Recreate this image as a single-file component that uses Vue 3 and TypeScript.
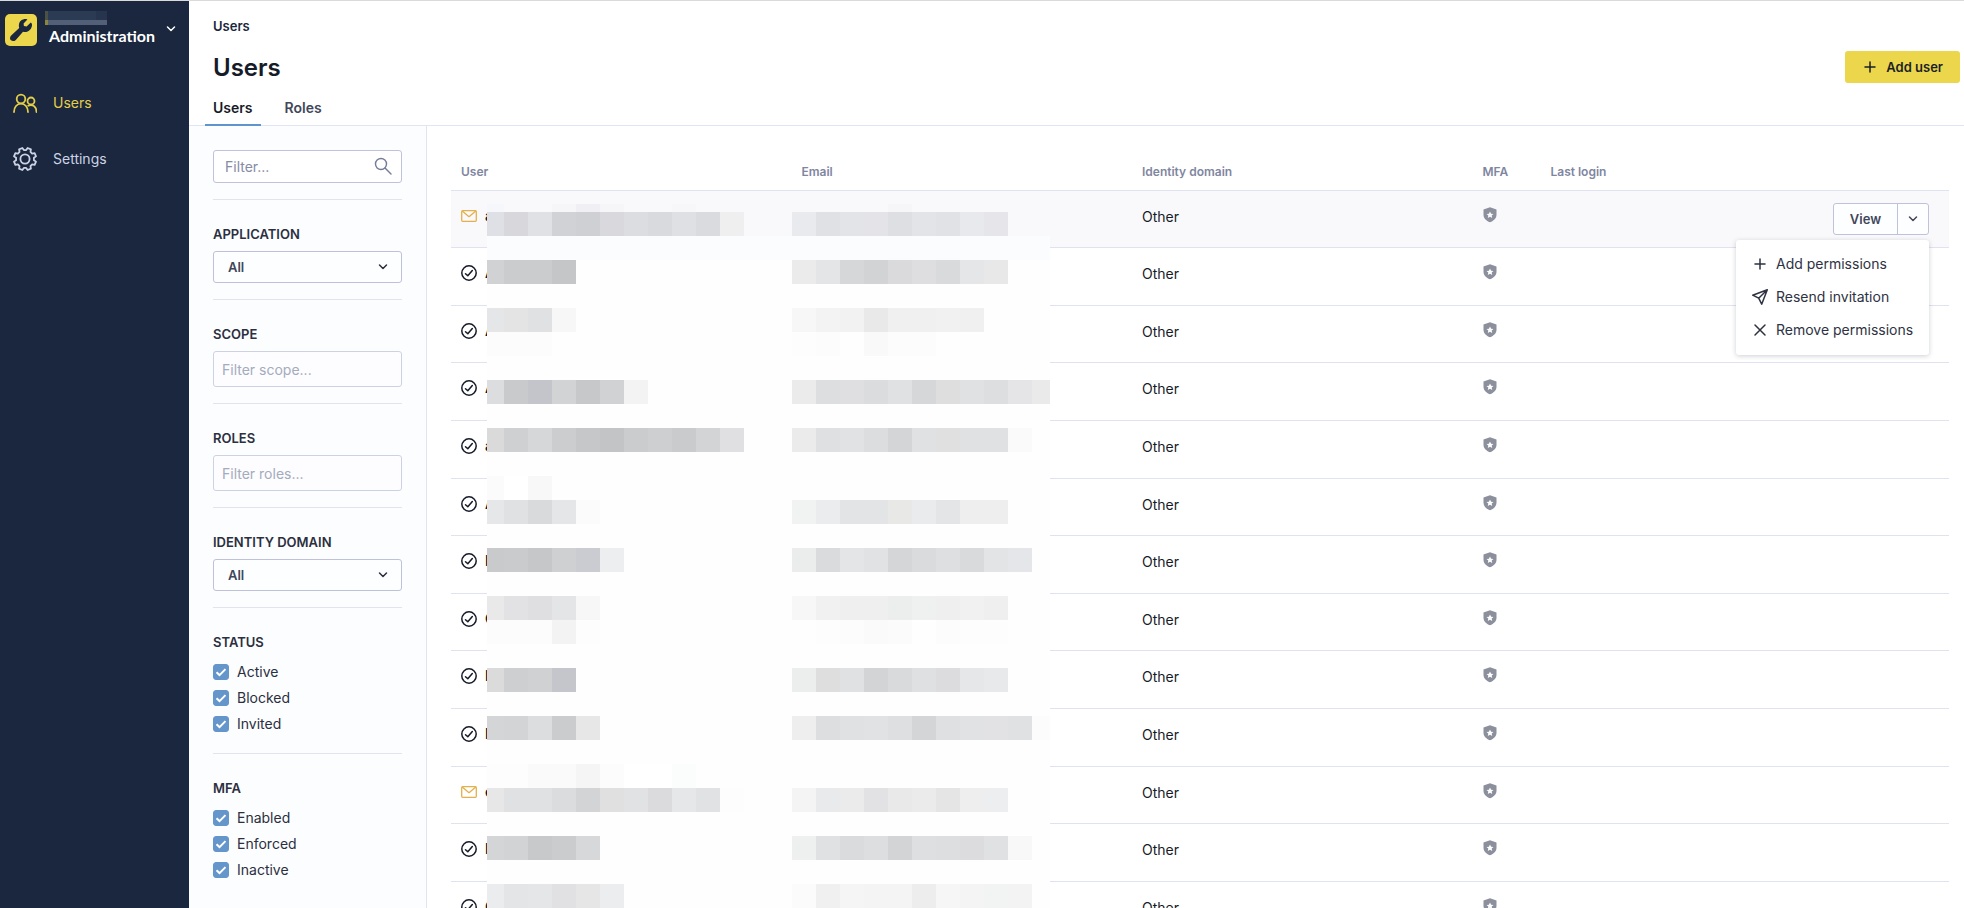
<script setup lang="ts">
import { ref } from 'vue'

type Status = 'invited' | 'active'
interface UserRow { initial: string; status: Status; domain: string }
interface Tile { col: number; row: number; color: string }
interface CheckGroup { title: string; options: { label: string; checked: boolean }[] }

const users = ref<UserRow[]>(
  ['a', 'A', 'A', 'A', 'a', 'A', 'B', 'C', 'D', 'E', 'e', 'F', 'G'].map((initial, i) => ({
    initial,
    status: i === 0 || i === 10 ? 'invited' : 'active',
    domain: 'Other',
  })),
)

const search = ref('')
const scope = ref('')
const roles = ref('')
const application = ref('All')
const domain = ref('All')
const groups = ref<CheckGroup[]>([
  { title: 'STATUS', options: ['Active', 'Blocked', 'Invited'].map((label) => ({ label, checked: true })) },
  { title: 'MFA', options: ['Enabled', 'Enforced', 'Inactive'].map((label) => ({ label, checked: true })) },
])

// Redaction strips: [grid row, first grid column, tile colours]
const strips: [number, number, string][] = [
  [1, 1, 'f5f7fb f9f9fb f9f9fb f6f6f8 f0eff4 f6f6f8 f9f9fb f9f9fb f7f7f9 f9f9fb f9f9fb'],
  [1, 18, 'f6f6f8'],
  [2, 1, 'dfe0e5 d8d7dc e0e1e5 d1d2d6 cfd0d4 d9d8dd dcdde1 d9dade dfe0e4 dadbdf efeff0'],
  [2, 14, 'e9eaee e0e1e5 e3e4e8 e4e3e8 dedfe3 e3e4e7 e1e2e5 e8e9ed e6e5ea'],
  [4, 1, 'd1d2d4 cbcccd cbcccd c5c6c8'],
  [4, 14, 'ebebeb e3e5e6 d6d7d9 d2d3d5 dadadc dedee0 d9dadc e5e6e8 e8e8e8'],
  [6, 1, 'e5e6e7 e4e4e4 e0e1e3 f7f7f7'],
  [6, 14, 'f7f7f7 f3f3f3 f2f2f2 e9e9e9 f0f0f0 f0f0f0 f1f1f1 f0f0f0'],
  [7, 1, 'fcfcfc fcfcfc fcfcfc'],
  [7, 14, 'fdfdfd fcfcfc fefefe f9f9f9 fcfcfc fcfcfc'],
  [9, 1, 'dcdddf c9cacc c4c5ca d2d3d5 c7c8ca d1d2d4 f3f3f3'],
  [9, 14, 'ebebeb dddee0 dfdfe1 dbdcde dfe1e2 d6d7d9 dededf e0e1e3 dcdee0 e5e5e8 eaeaea'],
  [11, 1, 'dadadb cfd0d2 d6d7d9 cccdcf c6c7c9 c3c4c6 cbccce cecfd1 cacbcd d3d4d6 e0e0e2'],
  [11, 14, 'ebebeb dfe0e2 e1e2e4 dcdddf d4d5d7 dfe1e2 e0e0e0 e0e1e3 e0e1e3 fafafa'],
  [13, 1, 'fbfbfb ffffff f8f8f8'],
  [14, 1, 'e6e7e8 e0e1e3 d9dadc e5e6e8 fbfbfb'],
  [14, 14, 'f0f3f2 ebecee e3e4e6 e3e4e6 e8e8e7 eaebed e4e5e7 eeeeee eeeeee'],
  [16, 1, 'c9cacc cacbcd c6c7c9 cfd0d2 cbccd1 edeeef'],
  [16, 14, 'ebedec dadbdd e4e5e7 e0e2e3 d5d6d8 dadbdd dedfe1 d9dadc e3e4e6 e5e6e9'],
  [18, 1, 'e9e9e9 e2e2e4 dfdfe1 e3e5e6 f7f7f7'],
  [18, 14, 'f7f7f7 f1f1f1 efefef efefef ebeeed eff1f1 efefef f1f1f1 efefef'],
  [19, 1, 'fcfcfc fcfcfc fcfcfc f3f3f3 fdfdfd'],
  [19, 14, 'fefefe fdfdfd fcfcfc fafafa fbfbfb fefefe fcfcfc fdfdfd fdfdfd'],
  [21, 1, 'dbdbdc cecfd1 d0d1d3 c5c6cb'],
  [21, 14, 'ebeeed dededf dfe1e2 d3d4d6 d9dadc dfe0e2 dcdcde e6e7e9 e8e9eb'],
  [23, 1, 'd4d5d7 d3d4d6 dcdddf cbcccd e7e7e7'],
  [23, 14, 'eeeeee dddee0 e0e1e3 e0e2e3 dedfe1 d4d5d7 dfe0e2 e0e2e3 e2e2e4 e0e1e3 fcfcfc'],
  [25, 1, 'fdfdfd fdfdfd fafafa fafafa f5f5f5 fcfcfc ffffff ffffff fbfdfc'],
  [26, 1, 'e7e7e7 e0e1e3 e0e1e3 dbdcde d3d4d6 e0e0e0 e1e2e4 dbdbdd e6e7e8 e1e2e4 fdfdfd'],
  [26, 14, 'f4f4f4 e8eaec ebebeb e2e2e4 e9e9e9 ebebeb e5e5e5 eeeeee edeeef'],
  [28, 1, 'd4d5d7 d2d3d5 c8c9cb cbccce d7d8da'],
  [28, 14, 'eef0ef dfe1e2 dadbdd dddee0 d3d4d6 dedfe1 dddee0 dcdcde e0e1e3 f8f8f8'],
  [30, 1, 'ebecee e4e5e7 e5e6e8 e1e1e3 e6e6e6 ecedef'],
  [30, 14, 'fbfbfb f0f0f0 f5f5f5 f4f4f4 f4f4f4 ededed f6f6f6 f4f4f4 f2f4f3 f3f3f3'],
]
const tiles: Tile[] = strips.flatMap(([row, start, list]) =>
  list.split(' ').map((c, i) => ({ row, col: start + i, color: '#' + c })),
)

// Outline of an eight-toothed cog centred on 12,12
const cog = (() => {
  const pts: string[] = []
  for (let i = 0; i < 8; i++) {
    const mid = i * 45 + 22.5
    for (const [offset, radius] of [[-15, 9], [-9, 11.3], [9, 11.3], [15, 9]]) {
      const a = ((mid + offset - 90) * Math.PI) / 180
      pts.push(`${(12 + radius * Math.cos(a)).toFixed(2)} ${(12 + radius * Math.sin(a)).toFixed(2)}`)
    }
  }
  return `M${pts.join('L')}Z`
})()
</script>

<template>
  <div class="app">
    <aside class="sidebar">
      <button class="brand" type="button">
        <svg class="logo" viewBox="0 0 32 32" aria-hidden="true">
          <rect width="32" height="32" rx="5" fill="#ecd74c" />
          <path d="M25.8 8.6 21.6 12.6 18.9 11.9 18.6 9.6 22.4 5.4C18.7 4.2 14.4 6.5 13.9 10.7c-.1 1.3 0 2.3.3 3.2L6.2 21.4c-1.7 1.7-1.4 3.8-.2 4.9 1.3 1.2 3.3 1.1 4.8-.4L18 17.7c4.7 1.4 9.3-2.7 9-7.3-.1-.9-.6-1.5-1.2-1.8Z" fill="#1a273e" />
        </svg>
        <span class="brand-text">
          <span class="org" aria-hidden="true"><i></i><i></i><i></i><i></i></span>
          <span class="product">Administration</span>
        </span>
        <svg class="brand-chevron" viewBox="0 0 10 10" aria-hidden="true"><path d="M1.5 3 5 6.5 8.5 3" /></svg>
      </button>
      <nav class="nav">
        <a href="#users" class="nav-item current">
          <svg viewBox="0 0 24 24" aria-hidden="true">
            <circle cx="8" cy="8" r="4.3" /><path d="M1 21c0-5 3-8.300 7-8.300s7 3.300 7 8.300" />
            <circle cx="18" cy="10" r="3.5" /><path d="M15.200 14.700c4.500-2.200 8.300 1.300 8.300 6.300" />
          </svg>
          Users
        </a>
        <a href="#settings" class="nav-item">
          <svg viewBox="0 0 24 24" aria-hidden="true"><path :d="cog" /><circle cx="12" cy="12" r="4.6" /></svg>
          Settings
        </a>
      </nav>
    </aside>

    <div class="page">
      <header class="header">
        <a href="#users" class="crumb">Users</a>
        <div class="title-row">
          <h1>Users</h1>
          <button class="add" type="button">
            <svg viewBox="0 0 16 16" aria-hidden="true"><path d="M8 3v10M3 8h10" /></svg>
            Add user
          </button>
        </div>
        <nav class="tabs">
          <a href="#users" class="tab selected">Users</a>
          <a href="#roles" class="tab">Roles</a>
        </nav>
      </header>

      <div class="body">
        <form class="filters" @submit.prevent>
          <div class="search">
            <input v-model="search" type="text" placeholder="Filter..." aria-label="Filter users" />
            <svg viewBox="0 0 18 18" aria-hidden="true"><circle cx="7" cy="7" r="5.5" /><path d="m11 11 6 6" /></svg>
          </div>
          <section class="group">
            <label for="application">APPLICATION</label>
            <div class="select">
              <select id="application" v-model="application"><option>All</option></select>
              <svg viewBox="0 0 10 10" aria-hidden="true"><path d="M1.5 3 5 6.5 8.5 3" /></svg>
            </div>
          </section>
          <section class="group">
            <label for="scope">SCOPE</label>
            <input id="scope" v-model="scope" class="text" type="text" placeholder="Filter scope..." />
          </section>
          <section class="group">
            <label for="roles">ROLES</label>
            <input id="roles" v-model="roles" class="text" type="text" placeholder="Filter roles..." />
          </section>
          <section class="group">
            <label for="domain">IDENTITY DOMAIN</label>
            <div class="select">
              <select id="domain" v-model="domain"><option>All</option></select>
              <svg viewBox="0 0 10 10" aria-hidden="true"><path d="M1.5 3 5 6.5 8.5 3" /></svg>
            </div>
          </section>
          <fieldset v-for="group in groups" :key="group.title" class="group">
            <legend>{{ group.title }}</legend>
            <label v-for="option in group.options" :key="option.label" class="check">
              <input v-model="option.checked" type="checkbox" />{{ option.label }}
            </label>
          </fieldset>
        </form>

        <main class="content">
          <table>
            <colgroup>
              <col class="wide" /><col class="wide" /><col class="wide" /><col class="narrow" /><col /><col class="actions-col" />
            </colgroup>
            <thead>
              <tr><th>User</th><th>Email</th><th>Identity domain</th><th>MFA</th><th>Last login</th><th></th></tr>
            </thead>
            <tbody>
              <tr v-for="(user, i) in users" :key="i" :class="{ hovered: i === 0 }">
                <td>
                  <div class="user">
                    <svg v-if="user.status === 'invited'" class="mail" viewBox="0 0 16 16" aria-label="Invited">
                      <rect x="0.7" y="2.7" width="14.6" height="10.6" rx="1" /><path d="m1.5 3.3 6.500 5.400 6.500-5.400" />
                    </svg>
                    <svg v-else class="ok" viewBox="0 0 16 16" aria-label="Active">
                      <circle cx="8" cy="8" r="7.2" /><path d="m4.5 8.7 2.300 2.100 4.500-5.300" />
                    </svg>
                    {{ user.initial }}
                  </div>
                </td>
                <td></td>
                <td>{{ user.domain }}</td>
                <td>
                  <svg class="shield" viewBox="0 0 16 16" aria-label="MFA inactive">
                    <path fill-rule="evenodd" d="M8 .3 14.500 2.500v5.300c0 3.400-2.600 6-6.500 7.500C4.100 13.800 1.500 11.200 1.500 7.800V2.500Zm0 4.200-1.100 2.200-2.400.3 1.800 1.600-.5 2.300 2.200-1.200 2.200 1.200-.5-2.300 1.800-1.600-2.400-.3Z" />
                  </svg>
                </td>
                <td></td>
                <td class="actions">
                  <div v-if="i === 0" class="split">
                    <button type="button" class="view">View</button>
                    <button type="button" class="more" aria-label="More actions" aria-expanded="true">
                      <svg viewBox="0 0 10 10" aria-hidden="true"><path d="M1.5 3 5 6.5 8.5 3" /></svg>
                    </button>
                    <div class="menu" role="menu">
                      <button type="button" role="menuitem">
                        <svg viewBox="0 0 16 16" aria-hidden="true"><path d="M8 3v10M3 8h10" /></svg>Add permissions
                      </button>
                      <button type="button" role="menuitem">
                        <svg viewBox="0 0 16 16" aria-hidden="true"><path d="M15.3.8.7 6.2l6 3 3 6ZM15.3.8 6.7 9.2" /></svg>Resend invitation
                      </button>
                      <button type="button" role="menuitem">
                        <svg viewBox="0 0 16 16" aria-hidden="true"><path d="m3 3 10 10M13 3 3 13" /></svg>Remove permissions
                      </button>
                    </div>
                  </div>
                </td>
              </tr>
            </tbody>
          </table>
          <div class="mosaic" aria-hidden="true">
            <div class="band first"></div>
            <div class="band second"></div>
            <span v-for="(t, i) in tiles" :key="i" :style="{ gridRow: t.row, gridColumn: t.col, background: t.color }"></span>
          </div>
        </main>
      </div>
    </div>
  </div>
</template>

<style>
body { margin: 0; }
</style>

<style scoped>
* { box-sizing: border-box; }
.app { display: flex; height: 100vh; overflow: hidden; border-top: 1px solid #dadada; background: #fff; color: #161b29; font: 14px/20px Inter, "Open Sans", sans-serif; }
button, input, select { font: inherit; color: inherit; }
button { cursor: pointer; }
a { text-decoration: none; color: inherit; }
svg { display: block; flex: none; fill: none; stroke: currentColor; stroke-linecap: round; stroke-linejoin: round; }

.sidebar { flex: none; width: 189px; background: #1a273e; color: #cdd3e6; }
.brand { display: flex; align-items: flex-start; width: 100%; padding: 10px 0 0 5px; border: 0; background: none; color: #fff; text-align: left; }
.logo { width: 32px; height: 32px; margin-top: 3px; stroke: none; }
.brand-text { display: flex; flex-direction: column; padding-left: 8px; }
.org { display: grid; grid-template-columns: 3px 48px 11px; grid-template-rows: 9px 5px; width: 62px; height: 14px; }
.org i { background: #2c3b54; }
.org i:nth-child(1) { background: #4b5144; }
.org i:nth-child(3) { background: #26344e; }
.org i:nth-child(4) { grid-column: 1 / -1; background: linear-gradient(90deg, #8b853f 3px, #525f77 3px); }
.product { padding-left: 4px; font: 700 16px/22px Lato, "Open Sans", sans-serif; }
.brand-chevron { width: 10px; height: 10px; margin: 13px 0 0 11px; stroke-width: 1.5; }
.nav { padding-top: 28px; }
.nav-item { display: flex; align-items: center; gap: 16px; height: 56px; padding-left: 13px; }
.nav-item svg { width: 24px; height: 24px; stroke-width: 1.8; }
.nav-item.current { color: #e2ce49; }

.page { display: flex; flex: 1; flex-direction: column; min-width: 0; }
.header { flex: none; padding: 15px 4px 0 24px; border-bottom: 1px solid #e1e4f2; }
.crumb { display: block; color: #1a273e; font-size: 13px; font-weight: 600; }
.title-row { display: flex; align-items: center; justify-content: space-between; height: 32px; margin-top: 15px; }
h1 { margin: 0; padding-top: 2px; font-size: 24px; line-height: 32px; font-weight: 600; }
.add { display: flex; align-items: center; gap: 8px; height: 32px; padding: 0 17px; border: 0; border-radius: 3px; background: #ecd74c; color: #1c1f26; font-size: 13px; font-weight: 600; }
.add svg { width: 16px; height: 16px; stroke-width: 1.5; }
.tabs { display: flex; gap: 16px; margin: 11px 0 -1px -8px; }
.tab { height: 32px; padding: 4px 8px 0; border-bottom: 2px solid transparent; color: #42475a; font-weight: 600; line-height: 20px; }
.tab.selected { border-color: #6094cd; color: #161b29; }

.body { display: flex; flex: 1; min-height: 0; }
.filters { flex: none; width: 238px; padding: 24px 24px 0; border-right: 1px solid #e1e4f2; background: #fcfdff; color: #2b2f3e; }
.search { position: relative; margin-bottom: 16px; }
.search input { width: 100%; height: 33px; padding: 0 36px 0 11px; border: 1px solid #bfc2da; border-radius: 3px; background: #fff; }
.search svg { position: absolute; right: 10px; top: 7px; width: 18px; height: 18px; color: #757d96; stroke-width: 1.4; }
input::placeholder { color: #858ca3; opacity: 1; }
.group { display: block; min-width: 0; margin: 0; padding: 24px 0 16px; border: 0; border-top: 1px solid #e1e4ef; }
.group > label:not(.check), legend { display: block; float: left; width: 100%; margin-bottom: 7px; padding: 0; font-size: 13px; font-weight: 600; line-height: 20px; }
.select { position: relative; clear: both; }
select { display: block; width: 100%; height: 32px; padding: 0 14px; border: 1px solid #bfc0da; border-radius: 3px; appearance: none; background: #fdfeff; color: #41465a; font-size: 13px; font-weight: 600; }
.select svg { position: absolute; right: 14px; top: 11px; width: 10px; height: 10px; stroke-width: 1.5; pointer-events: none; }
.text { display: block; clear: both; width: 100%; height: 36px; padding: 0 8px; border: 1px solid #cdd2e3; border-radius: 3px; background: #fdfdff; }
.text::placeholder { color: #a4abbd; }
.check { display: flex; align-items: center; gap: 8px; clear: both; height: 26px; }
.check input { width: 16px; height: 16px; margin: 0; appearance: none; border-radius: 3px; border: 1px solid #6596cb; }
.check input:checked { background: #6596cb url("data:image/svg+xml,%3Csvg xmlns='http://www.w3.org/2000/svg' viewBox='0 0 14 14'%3E%3Cpath d='m2.5 7.300 3 2.800 6-6' fill='none' stroke='white' stroke-width='2'/%3E%3C/svg%3E"); }

.content { position: relative; flex: 1; min-width: 0; padding: 24px 15px 0 24px; overflow: hidden; }
table { width: 100%; table-layout: fixed; border-collapse: separate; border-spacing: 0; }
.wide { width: 22.73%; }
.narrow { width: 68px; }
.actions-col { width: 160px; }
th { height: 41px; padding: 3px 10px 0; border-bottom: 1px solid #dfe2f1; color: #7f869f; font-size: 12px; font-weight: 600; line-height: 16px; text-align: left; }
td { height: 57px; padding: 16px 10px 0; border-bottom: 1px solid #e1e2ef; vertical-align: top; }
tr:nth-child(5n + 2) td, tr:nth-child(5n + 4) td, tr:nth-child(5n) td { height: 58px; }
.hovered td { background: #f9f9fb; }
.user { display: flex; align-items: center; gap: 8px; height: 18px; font-weight: 600; }
.user svg { width: 16px; height: 16px; }
.mail { color: #e4b04c; stroke-width: 1.3; }
.ok { stroke-width: 1.5; }
.shield { width: 16px; height: 16px; fill: #8c8f9c; stroke: none; }
td.actions { padding: 12px 20px 0 0; }
.split { position: relative; display: flex; width: 96px; height: 32px; margin-left: auto; border: 1px solid #bfc2dc; border-radius: 3px; background: #fdfeff; color: #41465a; }
.view { flex: 1; padding: 0; border: 0; background: none; font-size: 13px; font-weight: 600; }
.more { display: flex; align-items: center; justify-content: center; width: 31px; padding: 0; border: 0; border-left: 1px solid #bfc2dc; background: none; }
.more svg { width: 10px; height: 10px; stroke-width: 1.5; }
.menu { position: absolute; z-index: 2; top: 36px; right: -1px; width: 193px; padding: 7px 0 9px; border-radius: 3px; background: #fff; box-shadow: 0 1px 5px rgb(30 35 60 / 22%); }
.menu button { display: flex; align-items: center; gap: 8px; width: 100%; height: 33px; padding: 0 0 0 16px; border: 0; background: none; color: #2e3242; white-space: nowrap; }
.menu svg { width: 16px; height: 16px; stroke-width: 1.5; }

.mosaic { position: absolute; top: 78px; left: 60px; display: grid; grid-template-columns: 17px repeat(22, 24px) 18px; grid-template-rows: 8px repeat(29, 24px); background: #fefefe; }
.band { grid-column: 1 / -1; }
.first { grid-row: 1 / 3; background: #f9f9fb; }
.second { grid-row: 3; background: #fbfcfe; }
</style>
